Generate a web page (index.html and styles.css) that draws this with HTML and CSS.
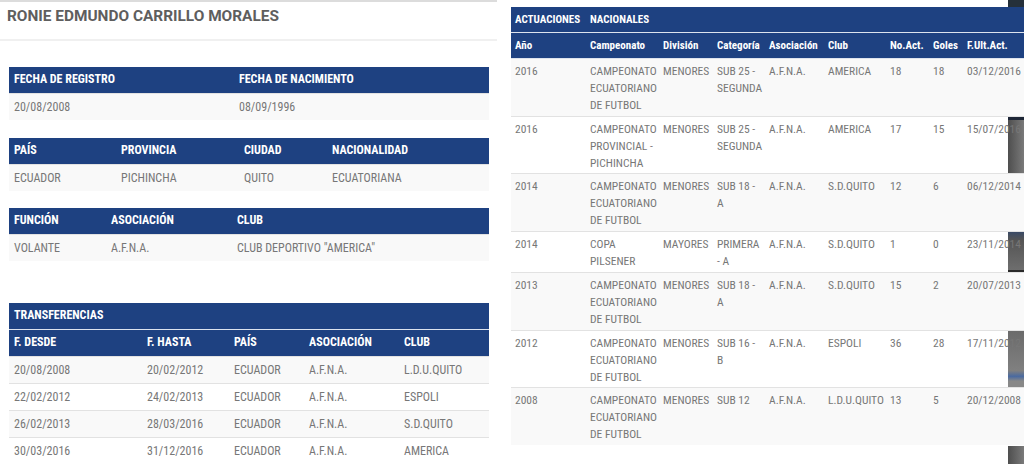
FILE: index.html
```html
<!DOCTYPE html>
<html lang="es">
<head>
<meta charset="utf-8">
<title>Ronie Edmundo Carrillo Morales</title>
<link rel="stylesheet" href="styles.css">
</head>
<body>
<div class="left">
  <h1 class="title">RONIE EDMUNDO CARRILLO MORALES</h1>
  <div class="sections">
    <table class="info t1">
      <colgroup><col class="c225"><col></colgroup>
      <thead><tr><th>FECHA DE REGISTRO</th><th>FECHA DE NACIMIENTO</th></tr></thead>
      <tbody><tr><td>20/08/2008</td><td>08/09/1996</td></tr></tbody>
    </table>
    <table class="info t2">
      <colgroup><col class="c107"><col class="c123"><col class="c88"><col></colgroup>
      <thead><tr><th>PAÍS</th><th>PROVINCIA</th><th>CIUDAD</th><th>NACIONALIDAD</th></tr></thead>
      <tbody><tr><td>ECUADOR</td><td>PICHINCHA</td><td>QUITO</td><td>ECUATORIANA</td></tr></tbody>
    </table>
    <table class="info t3">
      <colgroup><col class="c97"><col class="c126"><col></colgroup>
      <thead><tr><th>FUNCIÓN</th><th>ASOCIACIÓN</th><th>CLUB</th></tr></thead>
      <tbody><tr><td>VOLANTE</td><td>A.F.N.A.</td><td>CLUB DEPORTIVO "AMERICA"</td></tr></tbody>
    </table>
    <table class="info t4">
      <colgroup><col class="c133"><col class="c87"><col class="c75"><col class="c95"><col></colgroup>
      <thead>
        <tr class="cap"><th colspan="5">TRANSFERENCIAS</th></tr>
        <tr><th>F. DESDE</th><th>F. HASTA</th><th>PAÍS</th><th>ASOCIACIÓN</th><th>CLUB</th></tr>
      </thead>
      <tbody>
        <tr><td>20/08/2008</td><td>20/02/2012</td><td>ECUADOR</td><td>A.F.N.A.</td><td>L.D.U.QUITO</td></tr>
        <tr><td>22/02/2012</td><td>24/02/2013</td><td>ECUADOR</td><td>A.F.N.A.</td><td>ESPOLI</td></tr>
        <tr><td>26/02/2013</td><td>28/03/2016</td><td>ECUADOR</td><td>A.F.N.A.</td><td>S.D.QUITO</td></tr>
        <tr><td>30/03/2016</td><td>31/12/2016</td><td>ECUADOR</td><td>A.F.N.A.</td><td>AMERICA</td></tr>
      </tbody>
    </table>
  </div>
</div>
<div class="right">
  <div class="bg b1"></div>
  <div class="bg b2"></div>
  <div class="bg b3"></div>
  <div class="bg b4"></div>
  <div class="bg b5"></div>
  <table class="act">
    <colgroup><col class="a1"><col class="a2"><col class="a3"><col class="a4"><col class="a5"><col class="a6"><col class="a7"><col class="a8"><col class="a9"></colgroup>
    <thead>
      <tr><th>ACTUACIONES</th><th colspan="8">NACIONALES</th></tr>
      <tr><th>Año</th><th>Campeonato</th><th>División</th><th>Categoría</th><th>Asociación</th><th>Club</th><th>No.Act.</th><th>Goles</th><th>F.Ult.Act.</th></tr>
    </thead>
    <tbody>
      <tr><td>2016</td><td>CAMPEONATO ECUATORIANO DE FUTBOL</td><td>MENORES</td><td>SUB 25 - SEGUNDA</td><td>A.F.N.A.</td><td>AMERICA</td><td>18</td><td>18</td><td>03/12/2016</td></tr>
      <tr><td>2016</td><td>CAMPEONATO PROVINCIAL - PICHINCHA</td><td>MENORES</td><td>SUB 25 - SEGUNDA</td><td>A.F.N.A.</td><td>AMERICA</td><td>17</td><td>15</td><td>15/07/2016</td></tr>
      <tr><td>2014</td><td>CAMPEONATO ECUATORIANO DE FUTBOL</td><td>MENORES</td><td>SUB 18 - A</td><td>A.F.N.A.</td><td>S.D.QUITO</td><td>12</td><td>6</td><td>06/12/2014</td></tr>
      <tr><td>2014</td><td>COPA PILSENER</td><td>MAYORES</td><td>PRIMERA - A</td><td>A.F.N.A.</td><td>S.D.QUITO</td><td>1</td><td>0</td><td>23/11/2014</td></tr>
      <tr><td>2013</td><td>CAMPEONATO ECUATORIANO DE FUTBOL</td><td>MENORES</td><td>SUB 18 - A</td><td>A.F.N.A.</td><td>S.D.QUITO</td><td>15</td><td>2</td><td>20/07/2013</td></tr>
      <tr><td>2012</td><td>CAMPEONATO ECUATORIANO DE FUTBOL</td><td>MENORES</td><td>SUB 16 - B</td><td>A.F.N.A.</td><td>ESPOLI</td><td>36</td><td>28</td><td>17/11/2012</td></tr>
      <tr><td>2008</td><td>CAMPEONATO ECUATORIANO DE FUTBOL</td><td>MENORES</td><td>SUB 12</td><td>A.F.N.A.</td><td>L.D.U.QUITO</td><td>13</td><td>5</td><td>20/12/2008</td></tr>
    </tbody>
  </table>
</div>
</body>
</html>
```
FILE: styles.css
```css
* { box-sizing: border-box; }
html, body { margin: 0; padding: 0; }
body {
  width: 1024px;
  height: 464px;
  overflow: hidden;
  display: flex;
  background: #fff;
  color: #777;
  font-family: "Roboto Condensed", Roboto, sans-serif;
  font-size: 12px;
}
.left {
  flex: none;
  width: 497px;
  border-top: 2px solid #dcdcdc;
}
.title {
  margin: 0;
  height: 39px;
  padding: 5px 7px 0;
  border-bottom: 2px solid #f0f0f0;
  font-family: Roboto, sans-serif;
  font-size: 15.4px;
  line-height: 18px;
  font-weight: 700;
  color: #5e5e5e;
}
.sections {
  padding: 26px 8px 0 9px;
}
table {
  border-collapse: collapse;
  table-layout: fixed;
}
.info {
  width: 480px;
  margin-bottom: 18px;
}
.info.t2 { margin-bottom: 17px; }
.info.t3 { margin-bottom: 42px; }
.info th {
  background: #1e4181;
  color: #fff;
  font-weight: 700;
  text-align: left;
  padding: 4px 5px 5px;
  line-height: 17px;
  white-space: nowrap;
}
.info tr.cap th { border-bottom: 1px solid #dde3ee; }
.info td {
  padding: 5px 5px 4px;
  line-height: 17px;
  border-top: 1px solid #e2e2e2;
  white-space: nowrap;
}
.info tbody tr:nth-child(odd) td { background: #f9f9f9; }
.c225 { width: 225px; }
.c107 { width: 107px; }
.c123 { width: 123px; }
.c88 { width: 88px; }
.c97 { width: 97px; }
.c126 { width: 126px; }
.c133 { width: 133px; }
.c87 { width: 87px; }
.c75 { width: 75px; }
.c95 { width: 95px; }

.right {
  position: relative;
  flex: none;
  width: 513px;
  margin-left: 14px;
  padding-top: 7px;
}
.act {
  position: relative;
  z-index: 1;
  width: 522px;
  font-size: 11.5px;
}
.a1 { width: 75px; }
.a2 { width: 73px; }
.a3 { width: 54px; }
.a4 { width: 52px; }
.a5 { width: 59px; }
.a6 { width: 62px; }
.a7 { width: 43px; }
.a8 { width: 34px; }
.a9 { width: 70px; }
.act th {
  background: #1e4181;
  color: #fff;
  font-size: 11px;
  font-weight: 700;
  text-align: left;
  padding: 4px 2px 4px 4px;
  line-height: 17px;
  white-space: nowrap;
  border-bottom: 1px solid #dde3ee;
}
.act td {
  padding: 4px 2px 2px 4px;
  line-height: 16.9px;
  vertical-align: top;
  border-top: 1px solid #e2e2e2;
}
.act tbody tr:nth-child(odd) td { background: #f9f9f9; }
.bg {
  position: absolute;
  left: 497px;
  width: 16px;
  z-index: 0;
  background: linear-gradient(90deg, #4e4e4e, #7a7a7a);
}
.b1 { top: 0; height: 7px; background: #25303a; }
.b2 { top: 117px; height: 58px; border-top: 3px solid #1d2636; }
.b3 { top: 232px; height: 40px; border-bottom: 2px solid #2a2a2a; background: linear-gradient(180deg, #3a4a66 0, #555 8px, #6e6e6e); }
.b4 { top: 330px; height: 58px; background: linear-gradient(180deg, #6a6a6a 0, #808080 70%, #4a6aa0 80%, #888 88%); }
.b5 { top: 446px; height: 18px; }
```
